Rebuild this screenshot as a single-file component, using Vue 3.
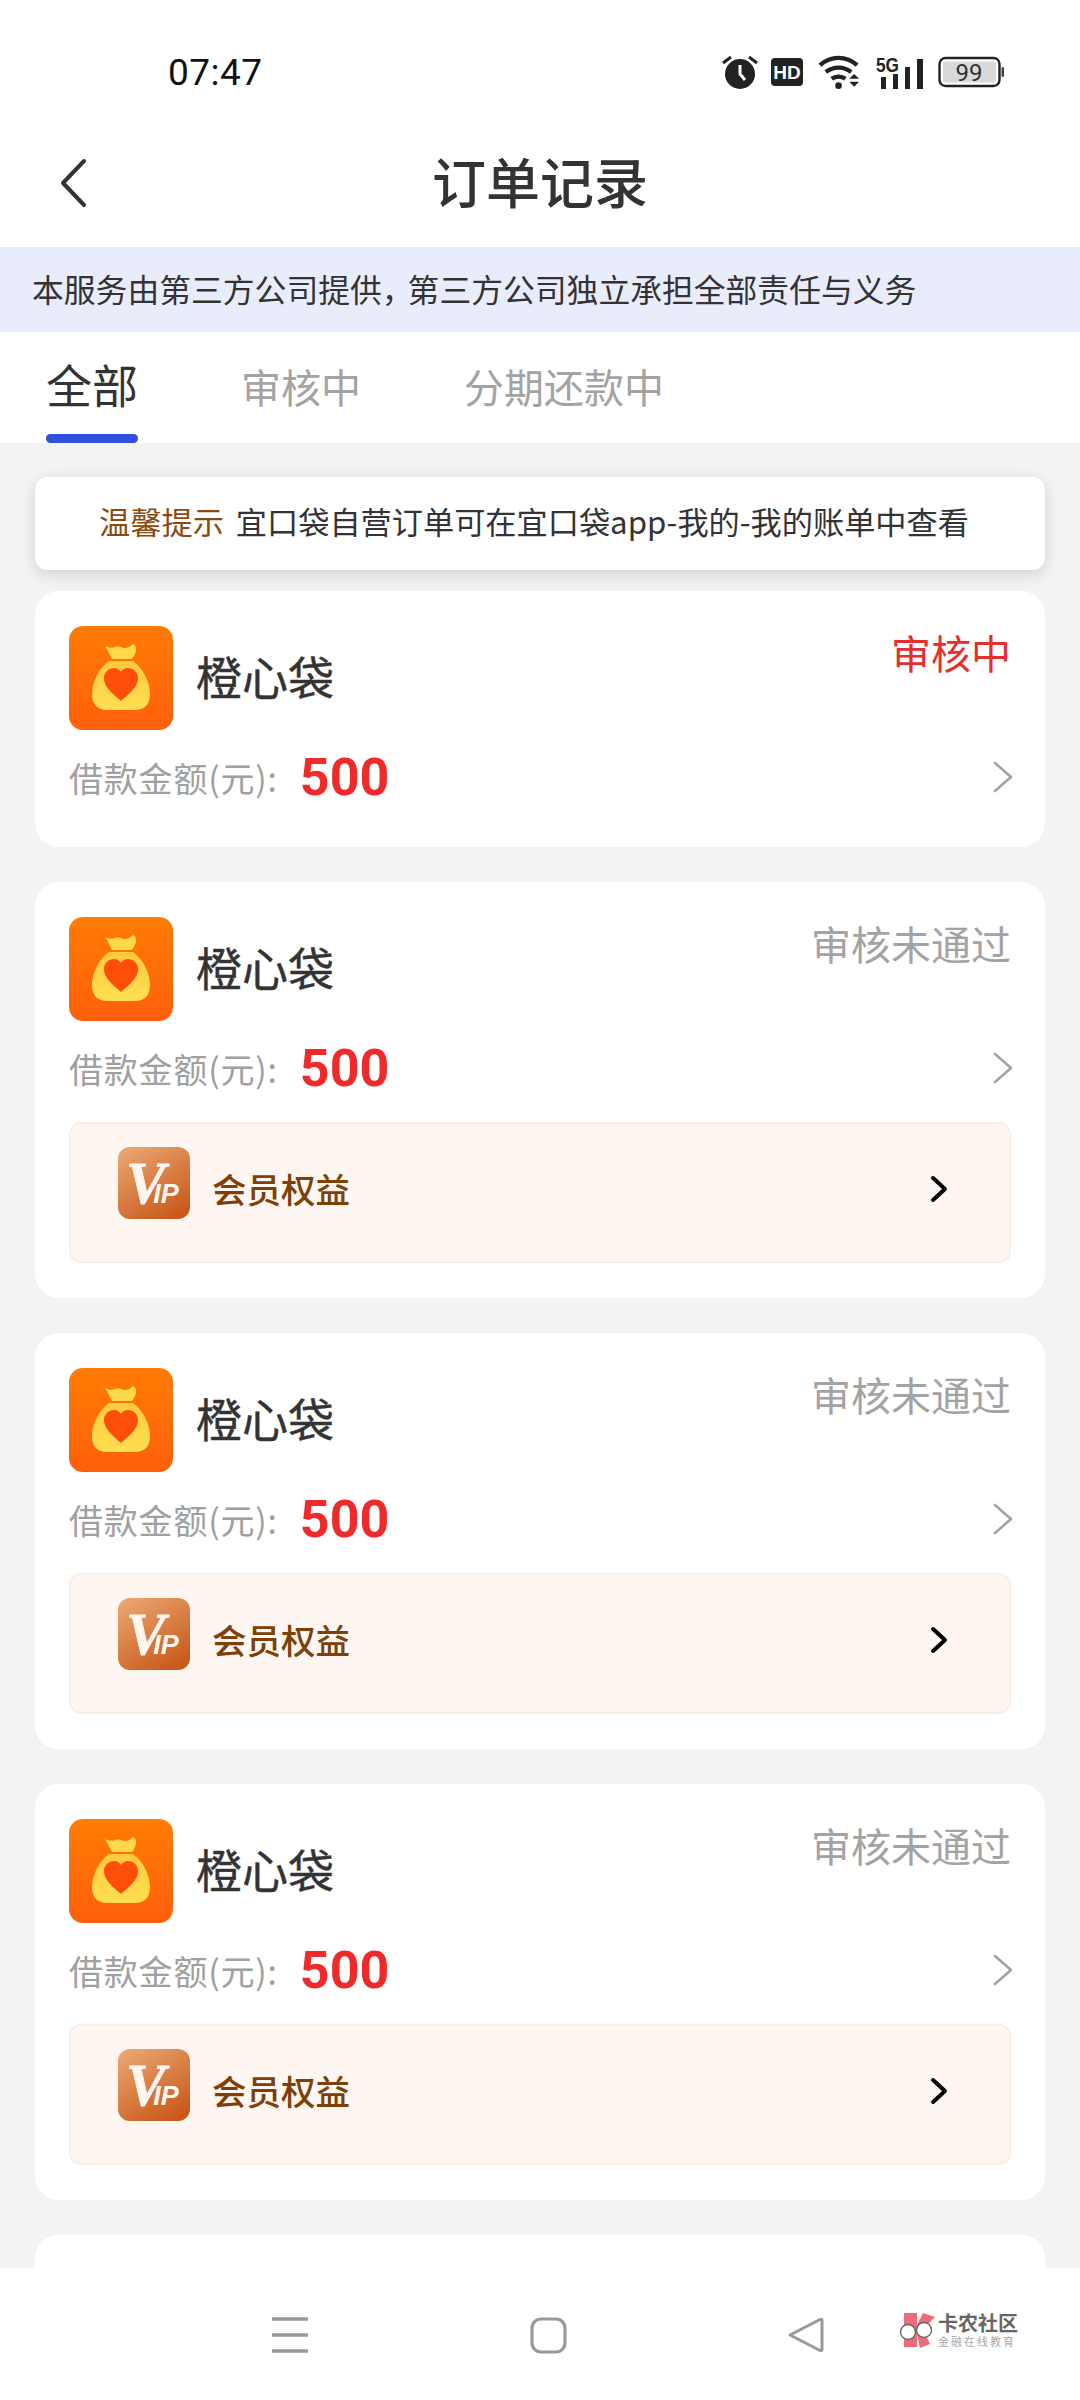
<template>
  <div class="page">
    <div class="status-bar">
      <span class="time">07:47</span>
      <div class="status-icons">
        <svg class="alarm" width="40" height="36" viewBox="0 0 40 36">
          <circle cx="20" cy="20" r="15" fill="#222" />
          <path d="M20 11v9l5 6" fill="none" stroke="#fff" stroke-width="3" />
          <path d="M3 9l8-6M37 9l-8-6" fill="none" stroke="#222" stroke-width="3" />
        </svg>
        <svg width="32" height="28" viewBox="0 0 32 28">
          <rect width="32" height="28" rx="4" fill="#222" />
          <text x="16" y="21" text-anchor="middle" class="hd">HD</text>
        </svg>
        <svg width="43" height="36" viewBox="0 0 44 36">
          <path d="M2 11C13 1 29 1 40 11M8 18c8-6 18-6 26 0M14 25c4-3 10-3 14 0" fill="none" stroke="#222" stroke-width="4.4" />
          <circle cx="21" cy="32" r="3.4" fill="#222" />
          <path d="M32 25l5-5 5 5zM32 28l5 5 5-5z" fill="#222" />
        </svg>
        <svg width="47" height="33" viewBox="0 0 47 33">
          <text x="0" y="16" class="five-g" textLength="23" lengthAdjust="spacingAndGlyphs">5G</text>
          <rect x="5" y="21" width="5" height="12" fill="#222" />
          <rect x="17" y="18" width="5" height="15" fill="#222" />
          <rect x="29" y="11" width="5" height="22" fill="#222" />
          <rect x="41" y="3" width="6" height="30" fill="#222" />
        </svg>
        <svg width="66" height="32" viewBox="0 0 66 32">
          <rect x="1.500" y="2" width="60" height="28" rx="6" fill="#fff" stroke="#222" stroke-width="2.4" />
          <rect x="5" y="5.500" width="53" height="21" rx="3" fill="#d9d9d9" />
          <rect x="63.500" y="11" width="2.500" height="10" rx="1" fill="#444" />
          <text x="31" y="25" text-anchor="middle" class="batt">99</text>
        </svg>
      </div>
    </div>

    <div class="nav-bar">
      <svg class="back" width="28" height="50" viewBox="0 0 28 50">
        <path d="M25 3L4 25l21 22" fill="none" stroke="#333" stroke-width="4" stroke-linecap="round" stroke-linejoin="round" />
      </svg>
      <span class="nav-title">订单记录</span>
    </div>

    <div class="notice">本服务由第三方公司提供<span class="comma">，</span>第三方公司独立承担全部责任与义务</div>

    <div class="tabs">
      <div
        v-for="(tab, i) in tabs"
        :key="tab"
        class="tab"
        :class="{ active: i === 0 }"
      >
        {{ tab }}
      </div>
    </div>

    <div class="content">
      <div class="tip">
        <span class="tip-label">温馨提示</span>
        <span class="tip-text">宜口袋自营订单可在宜口袋app-我的-我的账单中查看</span>
      </div>

      <div v-for="order in orders" :key="order.id" class="card">
        <div class="card-head">
          <svg class="logo" width="104" height="104" viewBox="0 0 104 104">
            <defs>
              <linearGradient :id="'bg' + order.id" x1="0" y1="0" x2="0" y2="1">
                <stop offset="0" stop-color="#ff7c05" />
                <stop offset="1" stop-color="#ff5f0c" />
              </linearGradient>
              <linearGradient :id="'bag' + order.id" x1="0" y1="0" x2="0" y2="1">
                <stop offset="0" stop-color="#ffc93e" />
                <stop offset="1" stop-color="#ffdf50" />
              </linearGradient>
            </defs>
            <rect width="104" height="104" rx="14" :fill="'url(#bg' + order.id + ')'" />
            <path d="M36 20c4 2 7 2 10 1 2-1 4-1 6 0 4 2 8 1 12-3 4 2 4 7 1 12-1 2-2 3-3 3H43c-2-4-4-8-7-13z" fill="#ffd84c" />
            <path d="M40 35h24c10 7 17 21 17 33 0 11-6 16-15 16H38c-9 0-15-5-15-16 0-12 7-26 17-33z" :fill="'url(#bag' + order.id + ')'" />
            <path d="M52 75C44 68 35 61 35 52c0-6 5-10 10-10 3 0 6 2 7 4 1-2 4-4 7-4 5 0 10 4 10 10 0 9-9 16-17 23z" fill="#ff4d0a" />
          </svg>
          <span class="name">{{ order.name }}</span>
          <span class="state" :class="{ pending: order.pending }">{{ order.state }}</span>
        </div>

        <div class="amount-row">
          <span class="amount-label">借款金额(元):</span>
          <span class="amount">{{ order.amount }}</span>
          <svg class="row-arrow" width="20" height="32" viewBox="0 0 20 32">
            <path d="M2 2l16 14L2 30" fill="none" stroke="#a3a3a3" stroke-width="2.6" stroke-linecap="round" stroke-linejoin="round" />
          </svg>
        </div>

        <div v-if="!order.pending" class="vip">
          <svg width="72" height="72" viewBox="0 0 72 72">
            <defs>
              <linearGradient :id="'vip' + order.id" x1="0.15" y1="0" x2="0.75" y2="1">
                <stop offset="0" stop-color="#eaa570" />
                <stop offset="1" stop-color="#c8591b" />
              </linearGradient>
            </defs>
            <rect width="72" height="72" rx="12" :fill="'url(#vip' + order.id + ')'" />
            <text x="8" y="56" class="vip-v">V<tspan class="vip-ip" dx="-12">IP</tspan></text>
          </svg>
          <span class="vip-text">会员权益</span>
          <svg class="vip-arrow" width="18" height="28" viewBox="0 0 18 28">
            <path d="M3 3l12 11L3 25" fill="none" stroke="#000" stroke-width="4" stroke-linecap="round" stroke-linejoin="round" />
          </svg>
        </div>
      </div>

      <!-- next card, only its top edge shows above the system bar -->
      <div class="card card-peek"></div>
    </div>

    <div class="bottom-bar">
      <svg class="sys menu" width="36" height="36" viewBox="0 0 36 36">
        <path d="M0 2h36M0 18h36M0 34h36" stroke="#999" stroke-width="3.4" />
      </svg>
      <svg class="sys home" width="37" height="37" viewBox="0 0 37 37">
        <rect x="2" y="2" width="33" height="33" rx="9" fill="none" stroke="#999" stroke-width="3.2" />
      </svg>
      <svg class="sys recent" width="37" height="36" viewBox="0 0 37 36">
        <path d="M3 18L33 2.500q2-1 2 1.500v28q0 2.500-2 1.500z" fill="none" stroke="#999" stroke-width="3" stroke-linejoin="round" />
      </svg>
      <div class="watermark">
        <svg width="36" height="36" viewBox="0 0 36 36">
          <path d="M5 1h13v34H5zM18 13L24 1l12 4-12 12 7 15-10 4-3-14z" fill="#ef6b7c" />
          <circle cx="9" cy="20" r="7.500" fill="#fff" stroke="#666" stroke-width="1.400" />
          <circle cx="25" cy="18" r="7.500" fill="#fff" stroke="#666" stroke-width="1.400" />
        </svg>
        <div class="mark-text">
          <span class="mark-main">卡农社区</span>
          <span class="mark-sub">金融在线教育</span>
        </div>
      </div>
    </div>
  </div>
</template>

<script setup>
const tabs = ["全部", "审核中", "分期还款中"];

const orders = [
  { id: 1, name: "橙心袋", state: "审核中", amount: 500, pending: true },
  { id: 2, name: "橙心袋", state: "审核未通过", amount: 500, pending: false },
  { id: 3, name: "橙心袋", state: "审核未通过", amount: 500, pending: false },
  { id: 4, name: "橙心袋", state: "审核未通过", amount: 500, pending: false },
];
</script>

<style scoped>
.page {
  position: relative;
  width: 1080px;
  height: 2400px;
  overflow: hidden;
  background: #f3f3f3;
  font-family: "Noto Sans CJK SC", "Noto Sans", sans-serif;
  color: #333;
}

.status-bar {
  display: flex;
  align-items: center;
  justify-content: space-between;
  height: 122px;
  padding: 22px 76px 0 168px;
  box-sizing: border-box;
  background: #fff;
}
.time {
  font-family: Roboto, sans-serif;
  font-size: 37px;
  color: #111;
  letter-spacing: 0.5px;
}
.status-icons {
  display: flex;
  align-items: center;
  gap: 15px;
}
.alarm {
  margin-right: -4px;
}
.hd {
  font-family: "Liberation Sans", sans-serif;
  font-size: 19px;
  font-weight: 700;
  fill: #fff;
}
.five-g {
  font-family: "Liberation Sans", sans-serif;
  font-size: 20px;
  font-weight: 700;
  fill: #222;
}
.batt {
  font-family: Roboto, sans-serif;
  font-size: 24px;
  fill: #333;
}

.nav-bar {
  display: grid;
  grid-template-columns: 1fr auto 1fr;
  align-items: center;
  height: 125px;
  padding-bottom: 3px;
  box-sizing: border-box;
  background: #fff;
}
.back {
  margin-left: 59px;
}
.nav-title {
  margin-bottom: 5px;
  font-size: 54px;
  font-weight: 500;
  line-height: 1;
}

.notice {
  height: 85px;
  padding-left: 32px;
  background: #e9edfb;
  font-size: 31.800px;
  line-height: 83px;
  color: #333;
  white-space: nowrap;
}
.comma {
  margin-right: -6px;
}

.tabs {
  display: flex;
  align-items: flex-start;
  height: 111px;
  padding-left: 46px;
  gap: 103px;
  background: #fff;
}
.tab {
  position: relative;
  height: 111px;
  font-size: 40px;
  line-height: 108px;
  color: #a3a3a3;
}
.tab.active {
  font-size: 46px;
  line-height: 102px;
  color: #333;
}
.tab.active::after {
  content: "";
  position: absolute;
  left: 0;
  right: 0;
  bottom: 0;
  height: 9px;
  border-radius: 5px;
  background: #2f50e0;
}

.content {
  display: flex;
  flex-direction: column;
  padding: 34px 35px 0;
}
.tip {
  display: flex;
  align-items: center;
  justify-content: center;
  gap: 12px;
  height: 93px;
  padding: 0 12px 6px 0;
  box-sizing: border-box;
  margin-bottom: 21px;
  border-radius: 12px;
  background: #fff;
  box-shadow: 0 4px 16px rgba(0, 0, 0, 0.14);
  font-size: 31.200px;
  white-space: nowrap;
}
.tip-label {
  color: #8a4a10;
}

.card {
  flex: none;
  padding: 35px 34px 34px;
  margin-bottom: 35px;
  border-radius: 24px;
  background: #fff;
}
.card-peek {
  height: 120px;
  margin-bottom: 0;
}
.card-head {
  display: flex;
  align-items: flex-start;
}
.logo {
  flex: none;
}
.name {
  margin: 20px 0 0 23px;
  font-size: 46px;
  line-height: 58px;
  color: #333;
  -webkit-text-stroke: 0.4px #333;
}
.state {
  margin: -3px 0 0 auto;
  font-size: 40px;
  line-height: 58px;
  color: #a3a3a3;
}
.state.pending {
  color: #e62e2e;
}

.amount-row {
  display: flex;
  align-items: center;
  height: 66px;
  margin-top: 14px;
  padding-bottom: 3px;
}
.amount-label {
  font-size: 34px;
  letter-spacing: 0.8px;
  color: #a0a0a0;
}
.amount {
  margin-left: 22px;
  font-family: Roboto, sans-serif;
  font-size: 52px;
  font-weight: 700;
  color: #ee2a2a;
}
.row-arrow {
  margin: 0 -2px 0 auto;
}

.vip {
  display: flex;
  align-items: flex-start;
  height: 141px;
  margin: 18px 0 1px;
  padding: 23px 0 0 47px;
  box-sizing: border-box;
  border: 2px solid #fbeee4;
  border-radius: 12px;
  background: #fdf6f1;
}
.vip-v {
  font-family: "Liberation Serif", serif;
  font-size: 59px;
  font-weight: 700;
  font-style: italic;
  fill: #fff6ee;
  stroke: #fff6ee;
  stroke-width: 0.8px;
}
.vip-ip {
  font-family: "Liberation Sans", sans-serif;
  font-size: 27px;
  stroke-width: 0;
}
.vip-text {
  margin: 16px 0 0 22px;
  font-size: 34.500px;
  font-weight: 500;
  line-height: 50px;
  color: #7e3f08;
}
.vip-arrow {
  margin: 28px 61px 0 auto;
}

.bottom-bar {
  position: absolute;
  left: 0;
  right: 0;
  bottom: 0;
  height: 132px;
  background: #fff;
}
.sys {
  position: absolute;
  top: 49px;
}
.menu {
  left: 272px;
}
.home {
  left: 530px;
}
.recent {
  left: 787px;
}
.watermark {
  position: absolute;
  left: 899px;
  top: 44px;
  display: flex;
  align-items: center;
  gap: 3px;
}
.mark-text {
  display: flex;
  flex-direction: column;
}
.mark-main {
  font-size: 20px;
  font-weight: 700;
  line-height: 22px;
  color: #666;
}
.mark-sub {
  font-size: 11px;
  line-height: 14px;
  letter-spacing: 2px;
  color: #a8a8a8;
  white-space: nowrap;
}
</style>

<style>
html,
body {
  margin: 0;
  background: #f3f3f3;
}
</style>
